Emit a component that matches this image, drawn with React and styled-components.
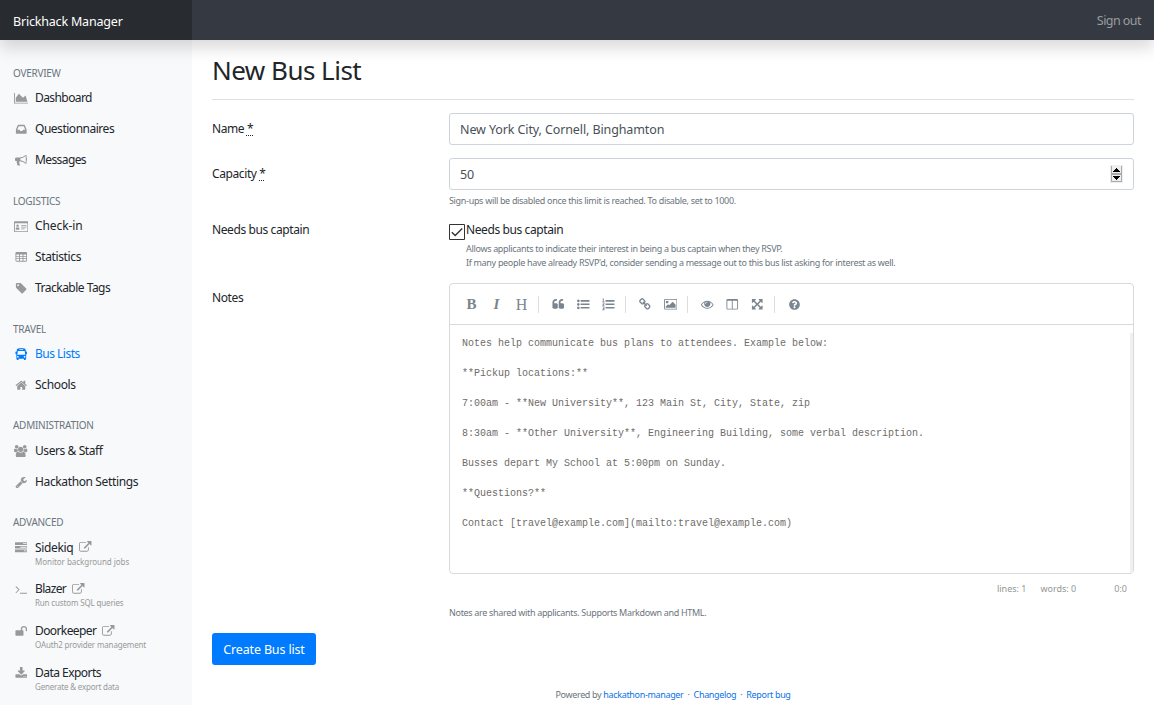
import React from "react";
import styled, { createGlobalStyle } from "styled-components";
import { FaQuestionCircle } from "react-icons/fa";

const Global = createGlobalStyle`
  * { box-sizing: border-box; }
  html, body { margin: 0; height: 705px; overflow: hidden; }
  body { background: #fff; color: #212529; font: 12px/18px "Noto Sans", "Open Sans", sans-serif; letter-spacing: -0.4px; }
`;

const Header = styled.header`
  display: flex; justify-content: space-between; align-items: center;
  position: relative; z-index: 2; height: 40px; background: #353a42;
  box-shadow: 0 8px 16px rgba(0, 0, 0, 0.15); color: #9a9da0;
`;
const Brand = styled.div`
  width: 192px; height: 40px; padding: 3px 13px 0; background: #282b2f; color: #fff;
  font-size: 12.5px; line-height: 37px; letter-spacing: -0.19px;
`;
const SignOut = styled.a`padding: 2px 13px 0 0; font-size: 12.5px; letter-spacing: -0.55px;`;
const Body = styled.div`display: flex; height: 665px;`;
const Sidebar = styled.nav`width: 192px; flex: none; background: #f7f9fb; padding-top: 24.6px;`;
const Group = styled.section`margin-bottom: 17px;`;
const GroupTitle = styled.h6`
  margin: 0; padding: 0.4px 0 0 13px; height: 17.8px; line-height: 17px; font-size: 10px; font-weight: 400;
  color: #6c757d; letter-spacing: -0.27px;
`;
const NavItem = styled.a`
  display: flex; height: ${p => (p.$tall ? 41.8 : 31)}px; padding: 7px 0 0 13px; color: ${p => (p.$active ? "#007bff" : "#222529")};
`;
const IconCell = styled.span`width: 16px; height: 18px; margin-right: 6px; display: flex; align-items: center; justify-content: center; color: ${p => (p.$active ? "#007bff" : "#999")};`;
const NavText = styled.span`display: block; height: 18px; white-space: nowrap; letter-spacing: ${p => p.$ls ?? -0.45}px; svg { margin-left: 6px; vertical-align: -2px; color: #999; }`;
const NavHint = styled.small`display: block; margin-top: -1px; font-size: 8px; line-height: 12px; color: #999; letter-spacing: ${p => p.$ls ?? -0.15}px;`;

const Main = styled.main`flex: 1; min-width: 0; padding: 0 20px;`;
const Title = styled.h1`
  margin: 0 0 13px; height: 60px; border-bottom: 1px solid #dfe0e1; padding-top: 14px;
  font-size: 26px; line-height: 32px; font-weight: 400; letter-spacing: -0.52px;
`;
const Row = styled.div`display: flex; height: ${p => p.$h}px;`;
const Label = styled.label`width: 237px; flex: none; padding-top: ${p => p.$top ?? 7}px; abbr { text-decoration: underline dotted; text-underline-offset: 2px; }`;
const Field = styled.div`flex: 1; min-width: 0;`;
const Input = styled.div`
  height: 32px; border: 1px solid #ced4da; border-radius: 3px; padding: 0 10px;
  display: flex; align-items: center; justify-content: space-between;
  font-size: 12.5px; color: #495057; letter-spacing: -0.11px;
`;
const Value = styled.span`padding-top: 1px;`;
const Hint = styled.small`
  display: block; padding-top: ${p => p.$top ?? 0}px; font-size: 9px; line-height: 14px; color: #6c757d; white-space: nowrap; letter-spacing: -0.32px;
`;
const CheckRow = styled.div`display: flex; height: 21px; gap: 1px; svg { margin-top: 3px; flex: none; }`;
const CheckHints = styled.div`padding: 0 0 0 17px;`;

const Editor = styled.div`height: 291px; border: 1px solid #d9d9d9; border-radius: 4px; display: flex; flex-direction: column;`;
const Toolbar = styled.div`
  height: 41px; flex: none; border-bottom: 1px solid #d9d9d9; display: flex; align-items: center; padding: 1px 9px 0; color: #7b858f;
`;
const Tool = styled.span`
  width: 25px; height: 25px; display: flex; align-items: center; justify-content: center;
  font: ${p => p.$font || "bold 15px"} "Liberation Serif", serif; letter-spacing: 0;
`;
const Divider = styled.i`width: 1px; height: 17px; margin: 0 7px 0 4px; background: #ddd;`;
const Source = styled.pre`
  flex: 1; margin: 8px 0 0; padding: 3px 12px 0; border-right: 3px solid #f0f0f0; color: #6e6c69;
  font: 10px/15px "Liberation Mono", monospace; letter-spacing: 0;
`;
const Status = styled.div`
  display: flex; justify-content: flex-end; height: 32px; padding: 6px 7px 0 0; font-size: 9px; color: #959694; letter-spacing: 0;
  span + span { margin-left: 14px; } span:last-child { margin-left: 38px; }
`;
const Submit = styled.button`
  display: block; width: 104px; height: 32px; margin: 13px 0 21px; padding: 0; border: 0; border-radius: 3px; background: #007bff; color: #fff;
  font: 12.5px "Noto Sans", "Open Sans", sans-serif; letter-spacing: -0.15px; white-space: nowrap;
`;
const Footer = styled.footer`text-align: center; font-size: 9px; color: #6c757d; letter-spacing: -0.34px; line-height: 18px; a { color: #0b73e6; }`;

const PATHS = {
  area: [2048, "M2048 1536v128h-2048v-1536h128v1408h1920zm-384-1024l256 896h-1664v-576l448-576 576 576z"],
  inbox: [1792, "M1151 960h316q-1-3-2.5-8t-2.5-8l-212-496h-708l-212 496q-1 2-2.5 8t-2.5 8h316l95 192h320zm513 30v482q0 26-19 45t-45 19h-1408q-26 0-45-19t-19-45v-482q0-62 25-123l238-552q10-25 36.5-42t52.5-17h832q26 0 52.5 17t36.5 42l238 552q25 61 25 123z"],
  bullhorn: [1792, "M1664 640q53 0 90.5 37.5t37.5 90.5-37.5 90.5-90.5 37.5v384q0 52-38 90t-90 38q-417-347-812-380-58 19-91 66t-31 100.5 40 92.5q-20 33-23 65.5t6 58 33.5 55 48 50 61.5 50.5q-29 58-111.5 83t-168.5 11.5-132-55.5q-7-23-29.5-87.5t-32-94.5-23-89-15-101 3.5-98.5 22-110.5h-122q-66 0-113-47t-47-113v-192q0-66 47-113t113-47h480q435 0 896-384 52 0 90 38t38 90v384zm-128 604v-954q-394 302-768 343v270q377 42 768 341z"],
  card: [2048, "M128 192h1792q128 0 128 128v1280q0 128-128 128h-1792q-128 0-128-128v-1280q0-128 128-128zm0 256v1152h1792v-1152zM256 1408v-200q0-160 140-184 116 80 232 0 140 24 140 184v200zM512 640a176 176 0 1 1-1 0zM1024 704h768v128h-768zM1024 960h768v128h-768zM1024 1216h512v128h-512z"],
  table: [1792, "M224 128h1344q160 0 160 160v1088q0 160-160 160h-1344q-160 0-160-160v-1088q0-160 160-160zM192 512v192h384v-192zM704 512v192h384v-192zM1216 512v192h384v-192zM192 832v192h384v-192zM704 832v192h384v-192zM1216 832v192h384v-192zM192 1152v256h384v-256zM704 1152v256h384v-256zM1216 1152v256h384v-256z"],
  tag: [1792, "M576 448q0-53-37.5-90.5t-90.5-37.5-90.5 37.5-37.5 90.5 37.5 90.5 90.5 37.5 90.5-37.5 37.5-90.5zm1067 576q0 53-37 90l-491 492q-39 37-91 37-53 0-90-37l-715-716q-38-37-64.5-101t-26.5-117v-416q0-52 38-90t90-38h416q53 0 117 26.5t102 64.5l715 714q37 39 37 91z"],
  bus: [1792, "M256 256Q300 0 896 0T1536 256V512H1664Q1728 512 1728 576V832Q1728 896 1664 896H1600V1536H1536V1664Q1536 1792 1408 1792T1280 1664V1536H512V1664Q512 1792 384 1792T256 1664V1536H192V896H128Q64 896 64 832V576Q64 512 128 512H256ZM640 160V256H1152V160ZM416 416L320 960H1472L1376 416ZM416 1152a112 112 0 1 0 1 0ZM1376 1152a112 112 0 1 0 1 0Z"],
  home: [1792, "M1472 992v480q0 26-19 45t-45 19h-384v-384h-256v384h-384q-26 0-45-19t-19-45v-480q0-1 .5-3t.5-3l575-474 575 474q1 2 1 6zm223-69l-62 74q-8 9-21 11h-3q-13 0-21-7l-692-577-692 577q-12 8-24 7-13-2-21-11l-62-74q-8-10-7-23.5t11-21.5l719-599q32-26 76-26t76 26l244 204v-195q0-14 9-23t23-9h192q14 0 23 9t9 23v408l219 182q10 8 11 21.5t-7 23.5z"],
  users: [1920, "M593 896q-162 5-265 128h-134q-82 0-138-40.5t-56-118.5q0-353 124-353 6 0 43.5 21t97.5 42.5 119 21.5q67 0 133-23-5 37-5 66 0 139 81 256zm1071 637q0 120-73 189.5t-194 69.5h-874q-121 0-194-69.5t-73-189.5q0-53 3.5-103.5t14-109 26.5-108.5 43-97.5 62-81 85.5-53.5 111.5-20q10 0 43 21.5t73 48 107 48 135 21.5 135-21.5 107-48 73-48 43-21.5q61 0 111.5 20t85.5 53.5 62 81 43 97.5 26.5 108.5 14 109 3.5 103.5zm-1024-1277q0 106-75 181t-181 75-181-75-75-181 75-181 181-75 181 75 75 181zm704 384q0 159-112.5 271.5t-271.5 112.5-271.5-112.5-112.5-271.5 112.5-271.5 271.5-112.5 271.5 112.5 112.5 271.5zm576 225q0 78-56 118.5t-138 40.5h-134q-103-123-265-128 81-117 81-256 0-29-5-66 66 23 133 23 59 0 119-21.5t97.5-42.5 43.5-21q124 0 124 353zm-128-609q0 106-75 181t-181 75-181-75-75-181 75-181 181-75 181 75 75 181z"],
  wrench: [1792, "M448 1472q0-26-19-45t-45-19-45 19-19 45 19 45 45 19 45-19 19-45zm644-420l-682 682q-37 37-90 37-52 0-91-37l-106-108q-38-36-38-90 0-53 38-91l681-681q39 98 114.5 173.5t173.5 114.5zm634-435q0 39-23 106-47 134-164.5 217.5t-258.5 83.5q-185 0-316.5-131.5t-131.5-316.5 131.5-316.5 316.5-131.5q58 0 121.5 16.5t107.5 46.5q16 11 16 28t-16 28l-293 169v224l193 107q5-3 79-48.5t135.5-81 70.5-35.5q15 0 23.5 10t8.5 25z"],
  server: [1792, "M0 192H1792V576H0ZM0 704H1792V1088H0ZM0 1216H1792V1600H0ZM1152 330V438H1664V330ZM768 842V950H1664V842ZM1280 1354V1462H1664V1354Z"],
  terminal: [1792, "M649 983l-466 466q-10 10-23 10t-23-10l-50-50q-10-10-10-23t10-23l393-393-393-393q-10-10-10-23t10-23l50-50q10-10 23-10t23 10l466 466q10 10 10 23t-10 23zm1079 457v64q0 14-9 23t-23 9h-960q-14 0-23-9t-9-23v-64q0-14 9-23t23-9h960q14 0 23 9t9 23z"],
  unlock: [1792, "M1728 576v256q0 26-19 45t-45 19h-64q-26 0-45-19t-19-45v-256q0-106-75-181t-181-75-181 75-75 181v192h96q40 0 68 28t28 68v576q0 40-28 68t-68 28h-960q-40 0-68-28t-28-68v-576q0-40 28-68t68-28h672v-192q0-185 131.5-316.5t316.5-131.5 316.5 131.5 131.5 316.5z"],
  download: [1792, "M1344 1344q0-26-19-45t-45-19-45 19-19 45 19 45 45 19 45-19 19-45zm256 0q0-26-19-45t-45-19-45 19-19 45 19 45 45 19 45-19 19-45zm128-224v320q0 40-28 68t-68 28h-1472q-40 0-68-28t-28-68v-320q0-40 28-68t68-28h465l135 136q58 56 136 56t136-56l136-136h464q40 0 68 28t28 68zm-325-569q17 41-14 70l-448 448q-18 19-45 19t-45-19l-448-448q-31-29-14-70 17-39 59-39h256v-448q0-26 19-45t45-19h256q26 0 45 19t19 45v448h256q42 0 59 39z"],
  external: [1792, "M1408 928v320q0 119-84.5 203.5t-203.5 84.5h-832q-119 0-203.5-84.5t-84.5-203.5v-832q0-119 84.5-203.5t203.5-84.5h704q14 0 23 9t9 23v64q0 14-9 23t-23 9h-704q-66 0-113 47t-47 113v832q0 66 47 113t113 47h832q66 0 113-47t47-113v-320q0-14 9-23t23-9h64q14 0 23 9t9 23zm384-864v512q0 26-19 45t-45 19-45-19l-176-176-652 652q-10 10-23 10t-23-10l-114-114q-10-10-10-23t10-23l652-652-176-176q-19-19-19-45t19-45 45-19h512q26 0 45 19t19 45z"],
  quote: [1792, "M832 960v384q0 80-56 136t-136 56h-384q-80 0-136-56t-56-136v-704q0-104 40.5-198.5t109.5-163.5 163.5-109.5 198.5-40.5h64q26 0 45 19t19 45v128q0 26-19 45t-45 19h-64q-106 0-181 75t-75 181v32q0 40 28 68t68 28h224q80 0 136 56t56 136zm896 0v384q0 80-56 136t-136 56h-384q-80 0-136-56t-56-136v-704q0-104 40.5-198.5t109.5-163.5 163.5-109.5 198.5-40.5h64q26 0 45 19t19 45v128q0 26-19 45t-45 19h-64q-106 0-181 75t-75 181v32q0 40 28 68t68 28h224q80 0 136 56t56 136z"],
  ul: [1792, "M192 220a190 190 0 1 0 1 0ZM192 720a190 190 0 1 0 1 0ZM192 1220a190 190 0 1 0 1 0ZM512 300H1792V520H512ZM512 800H1792V1020H512ZM512 1300H1792V1520H512Z"],
  ol: [1792, "M512 300H1792V520H512ZM512 800H1792V1020H512ZM512 1300H1792V1520H512ZM80 60H250V440H350V540H60V440H130V190H60ZM60 640H350V880L200 1000H350V1110H50V980L230 830V750H60ZM60 1230H350V1740H60V1620H220V1530H120V1420H220V1340H60Z"],
  link: [1792, "M1456 1216q0-40-28-68l-208-208q-28-28-68-28-42 0-72 32 3 3 19 18.5t21.5 21.5 15 19 13 25.5 3.5 27.5q0 40-28 68t-68 28q-15 0-27.5-3.5t-25.5-13-19-15-21.5-21.5-18.5-19q-33 31-33 73 0 40 28 68l206 207q27 27 68 27 40 0 68-26l147-146q28-28 28-67zm-703-705q0-40-28-68l-206-207q-28-28-68-28-39 0-68 27l-147 146q-28 28-28 67 0 40 28 68l208 208q27 27 68 27 42 0 72-31-3-3-19-18.5t-21.5-21.5-15-19-13-25.5-3.5-27.5q0-40 28-68t68-28q15 0 27.5 3.5t25.5 13 19 15 21.5 21.5 18.5 19q33-31 33-73zm895 705q0 120-85 203l-147 146q-83 83-203 83-121 0-204-85l-206-207q-83-83-83-203 0-123 88-209l-88-88q-86 88-208 88-120 0-204-84l-208-208q-84-84-84-204t85-203l147-146q83-83 203-83 121 0 204 85l206 207q83 83 83 203 0 123-88 209l88 88q86-88 208-88 120 0 204 84l208 208q84 84 84 204z"],
  image: [1920, "M160 128H1760Q1920 128 1920 288V1504Q1920 1664 1760 1664H160Q0 1664 0 1504V288Q0 128 160 128ZM128 256V1536H1792V256ZM448 384a192 192 0 1 0 1 0ZM256 1408V1216L576 896L736 1056L1248 544L1664 960V1408Z"],
  eye: [1792, "M1664 960q-152-236-381-353 61 104 61 225 0 185-131.5 316.5t-316.5 131.5-316.5-131.5-131.5-316.5q0-121 61-225-229 117-381 353 133 205 333.5 326.5t434.5 121.5 434.5-121.5 333.5-326.5zm-720-384q0-20-14-34t-34-14q-125 0-214.5 89.5t-89.5 214.5q0 20 14 34t34 14 34-14 14-34q0-86 61-147t147-61q20 0 34-14t14-34zm848 384q0 34-20 69-140 230-376.5 368.5t-499.5 138.5-499.5-139-376.5-368q-20-35-20-69t20-69q140-229 376.5-368t499.5-139 499.5 139 376.5 368q20 35 20 69z"],
  columns: [1792, "M224 128H1568Q1728 128 1728 288V1504Q1728 1664 1568 1664H224Q64 1664 64 1504V288Q64 128 224 128ZM192 384V1536H832V384ZM960 384V1536H1600V384Z"],
  arrows: [1792, "M1411 541l-355 355 355 355 144-144q29-31 70-14 39 17 39 59v448q0 26-19 45t-45 19h-448q-42 0-59-40-17-39 14-69l144-144-355-355-355 355 144 144q31 30 14 69-17 40-59 40h-448q-26 0-45-19t-19-45v-448q0-42 40-59 39-17 69 14l144 144 355-355-355-355-144 144q-19 19-45 19-12 0-24-5-40-17-40-59v-448q0-26 19-45t45-19h448q42 0 59 40 17 39-14 69l-144 144 355 355 355-355-144-144q-31-30-14-69 17-40 59-40h448q26 0 45 19t19 45v448q0 42-39 59-13 5-25 5-26 0-45-19z"],
};

function Icon({ name, size = 12.5 }) {
  const [w, d] = PATHS[name];
  return (
    <svg width={(size * w) / 1792} height={size} viewBox={`0 0 ${w} 1792`} fill="currentColor" fillRule="evenodd">
      <path d={d} />
    </svg>
  );
}

const GROUPS = [
  { title: "OVERVIEW", items: [{ icon: "area", text: "Dashboard", ls: -0.58 }, { icon: "inbox", text: "Questionnaires", ls: -0.48 }, { icon: "bullhorn", text: "Messages", ls: -0.6 }] },
  { title: "LOGISTICS", items: [{ icon: "card", text: "Check-in", ls: -0.1 }, { icon: "table", text: "Statistics", ls: -0.37 }, { icon: "tag", text: "Trackable Tags", ls: -0.51 }] },
  { title: "TRAVEL", items: [{ icon: "bus", text: "Bus Lists", active: true, ls: -0.5 }, { icon: "home", text: "Schools", ls: -0.34 }] },
  { title: "ADMINISTRATION", items: [{ icon: "users", text: "Users & Staff", ls: -0.42 }, { icon: "wrench", text: "Hackathon Settings", ls: -0.37 }] },
  {
    title: "ADVANCED",
    items: [
      { icon: "server", text: "Sidekiq", ls: -0.36, ext: true, hint: "Monitor background jobs", hintLs: -0.04 },
      { icon: "terminal", text: "Blazer", ls: -0.65, ext: true, hint: "Run custom SQL queries" },
      { icon: "unlock", text: "Doorkeeper", ls: -0.6, ext: true, hint: "OAuth2 provider management" },
      { icon: "download", text: "Data Exports", ls: -0.53, hint: "Generate & export data", hintLs: -0.19 },
    ],
  },
];

const SOURCE = `Notes help communicate bus plans to attendees. Example below:

**Pickup locations:**

7:00am - **New University**, 123 Main St, City, State, zip

8:30am - **Other University**, Engineering Building, some verbal description.

Busses depart My School at 5:00pm on Sunday.

**Questions?**

Contact [travel@example.com](mailto:travel@example.com)`;

export default function App() {
  return (
    <>
      <Global />
      <Header>
        <Brand>Brickhack Manager</Brand>
        <SignOut>Sign out</SignOut>
      </Header>
      <Body>
        <Sidebar>
          {GROUPS.map(g => (
            <Group key={g.title}>
              <GroupTitle>{g.title}</GroupTitle>
              {g.items.map(it => (
                <NavItem key={it.text} $active={it.active} $tall={!!it.hint}>
                  <IconCell $active={it.active}><Icon name={it.icon} /></IconCell>
                  <div>
                    <NavText $ls={it.ls}>{it.text}{it.ext && <Icon name="external" />}</NavText>
                    {it.hint && <NavHint $ls={it.hintLs}>{it.hint}</NavHint>}
                  </div>
                </NavItem>
              ))}
            </Group>
          ))}
        </Sidebar>
        <Main>
          <Title>New Bus List</Title>
          <Row $h={45}>
            <Label>Name <abbr>*</abbr></Label>
            <Field><Input><Value>New York City, Cornell, Binghamton</Value></Input></Field>
          </Row>
          <Row $h={63}>
            <Label>Capacity <abbr>*</abbr></Label>
            <Field>
              <Input>
                <Value>50</Value>
                <svg width="13" height="18" viewBox="0 0 13 18" shapeRendering="crispEdges">
                  <path fill="#efefef" d="M0 0h13v18H0z" />
                  <path fill="#aaa" d="M1 1h1v16H1zM11 1h1v16h-1zM1 8h11v2H1zM1 16h11v1H1z" />
                  <path d="M6 3h1v1h1v1h1v1h1v1H3V6h1V5h1V4h1zM3 11h7v1H9v1H8v1H7v1H6v-1H5v-1H4v-1H3z" />
                </svg>
              </Input>
              <Hint $top={4}>Sign-ups will be disabled once this limit is reached. To disable, set to 1000.</Hint>
            </Field>
          </Row>
          <Row $h={62}>
            <Label $top={0}>Needs bus captain</Label>
            <Field>
              <CheckRow>
                <svg width="16" height="16" viewBox="0 0 16 16" fill="none">
                  <path d="M.5.5h15v15H.5z" stroke="#333" />
                  <path d="M2.8 8.2l3.4 3.4 7-7" stroke="#333" strokeWidth="1.4" />
                </svg>
                Needs bus captain
              </CheckRow>
              <CheckHints>
                <Hint>Allows applicants to indicate their interest in being a bus captain when they RSVP.</Hint>
                <Hint>If many people have already RSVP'd, consider sending a message out to this bus list asking for interest as well.</Hint>
              </CheckHints>
            </Field>
          </Row>
          <Row $h={337}>
            <Label $top={6}>Notes</Label>
            <Field>
              <Editor>
                <Toolbar>
                  <Tool>B</Tool>
                  <Tool $font="italic bold 15px">I</Tool>
                  <Tool $font="16px">H</Tool>
                  <Divider />
                  <Tool><Icon name="quote" /></Tool>
                  <Tool><Icon name="ul" /></Tool>
                  <Tool><Icon name="ol" /></Tool>
                  <Divider />
                  <Tool><Icon name="link" /></Tool>
                  <Tool><Icon name="image" /></Tool>
                  <Divider />
                  <Tool><Icon name="eye" /></Tool>
                  <Tool><Icon name="columns" /></Tool>
                  <Tool><Icon name="arrows" /></Tool>
                  <Divider />
                  <Tool><FaQuestionCircle size={11} /></Tool>
                </Toolbar>
                <Source>{SOURCE}</Source>
              </Editor>
              <Status><span>lines: 1</span><span>words: 0</span><span>0:0</span></Status>
              <Hint>Notes are shared with applicants. Supports Markdown and HTML.</Hint>
            </Field>
          </Row>
          <Submit>Create Bus list</Submit>
          <Footer>Powered by <a>hackathon-manager</a> &nbsp;·&nbsp; <a>Changelog</a> &nbsp;·&nbsp; <a>Report bug</a></Footer>
        </Main>
      </Body>
    </>
  );
}
